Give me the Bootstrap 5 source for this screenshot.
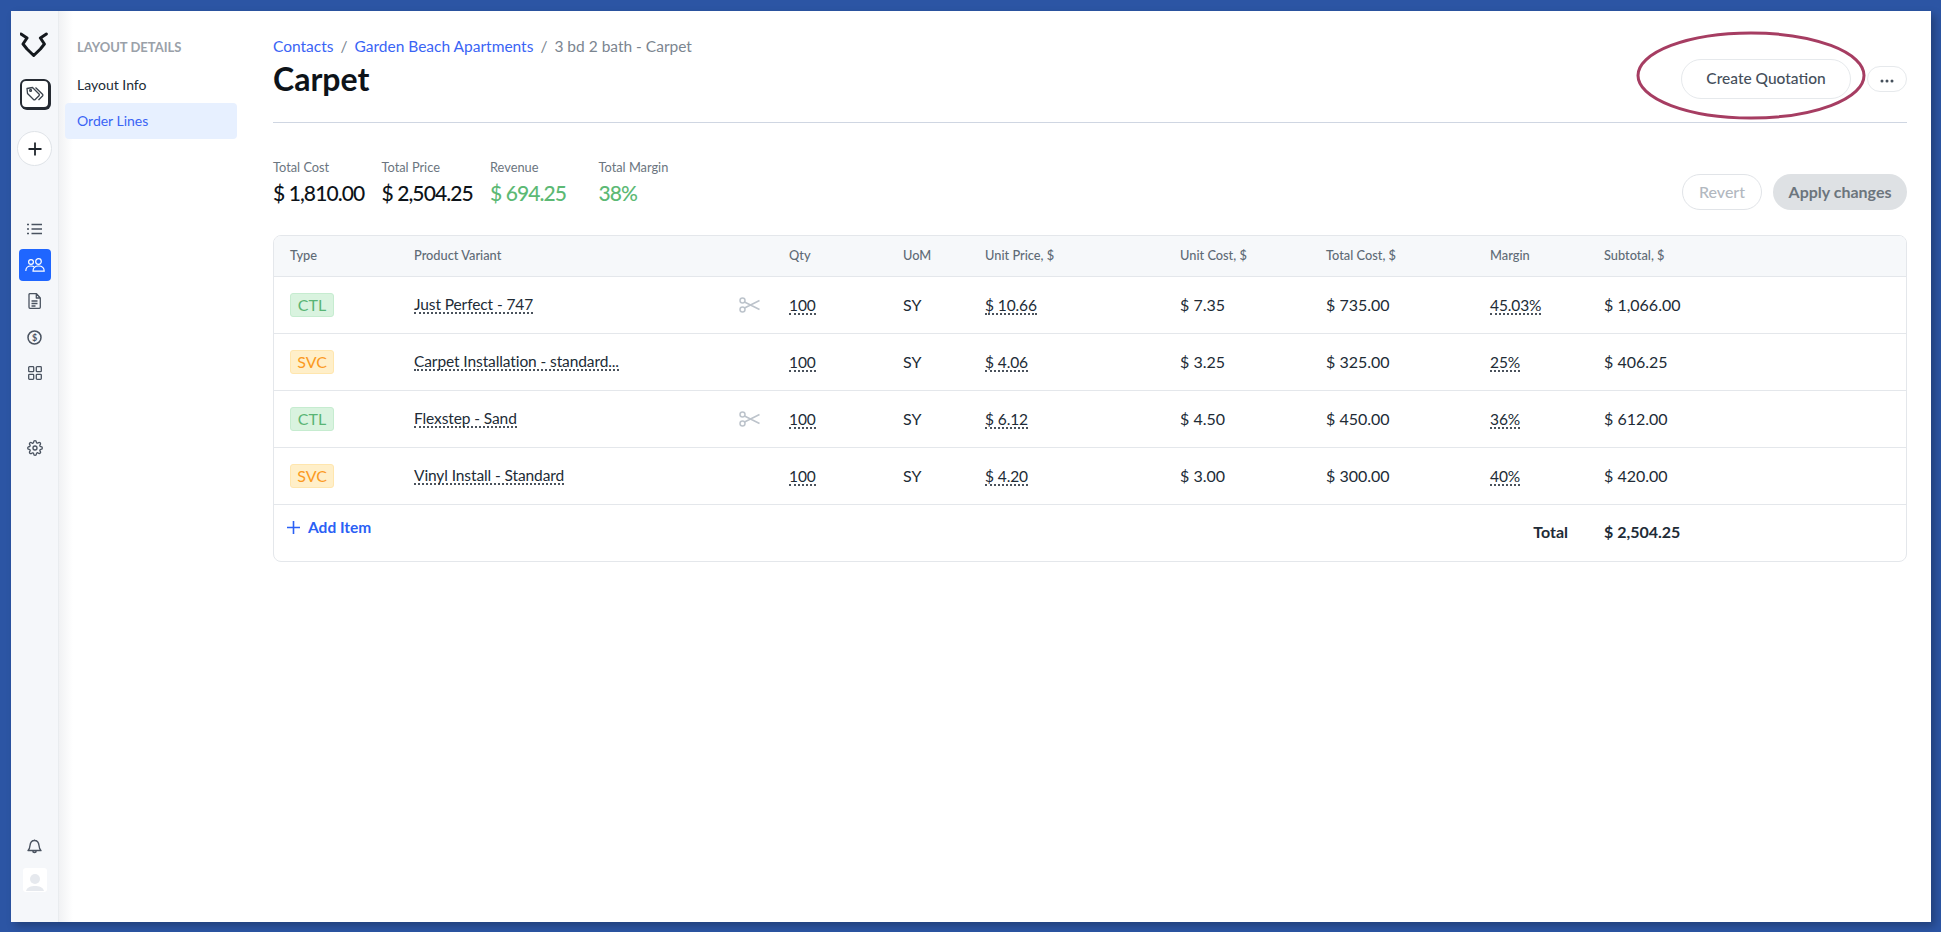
<!DOCTYPE html>
<html lang="en">
<head>
<meta charset="utf-8">
<title>Carpet</title>
<link href="https://cdn.jsdelivr.net/npm/bootstrap@5.3.0/dist/css/bootstrap.min.css" rel="stylesheet">
<style>
html,body{height:100%}
body{background:#2c55a4;font-family:"Lato","Liberation Sans",sans-serif;color:#212b36;padding:11px 10px 10px 11px;overflow:hidden}
.app-frame{height:911px;background:#fff;box-shadow:4px 4px 8px rgba(0,0,0,.25)}
.rail{width:48px;background:#f5f7fa;border-right:1px solid #e9ecef;flex:none;padding-top:21px}
.rail-logo{width:30px;height:26px}
.rail-tag{width:30px;height:30px;border:2px solid #262b33;border-radius:6px;background:#fff;margin-top:21px;box-shadow:1px 1px 0 #262b33}
.rail-plus{width:35px;height:35px;border:1px solid #dfe3e8;border-radius:50%;background:#fff;margin-top:22px}
.rail-item{width:32px;height:32px;border-radius:4px;color:#4a5360}
.rail-item.on{background:#1f66ff;color:#fff}
.rail-list{margin-top:47px}
.rail-next{margin-top:4px}
.rail-gear{margin-top:43px}
.rail-avatar{width:24px;height:24px;background:#fff;border-radius:3px;margin-top:6px;margin-bottom:30px}
.subnav{width:214px;flex:none;padding:27px 36px 0 6px;background:linear-gradient(90deg,#f1f2f4 0,#fff 14px)}
.subnav-title{font-size:13px;font-weight:700;color:#9aa1a9;padding-left:12px;line-height:18px;margin-bottom:11px}
.subnav-link{display:block;height:36px;line-height:36px;font-size:14px;padding-left:12px;border-radius:4px;color:#212b36;text-decoration:none}
.subnav-link.on{background:#e7f0ff;color:#3a64f5}
.main-area{min-width:0;padding:0 24px 0 0}
.head-row{height:112px;border-bottom:1px solid #cfd6e2;position:relative}
.crumbs{font-size:15.5px;line-height:20px;padding-top:25px;color:#7b8590;margin:0}
.crumbs a{color:#3a64f5;text-decoration:none}
.crumbs i{font-style:normal;padding:0 7px;color:#7b8590}
.page-title{font-size:32px;font-weight:700;line-height:40px;margin:3px 0 0;color:#0d1319}
.btn-quote{width:170px;height:40px;border:1px solid #e6e9ec;border-radius:20px;background:#fff;color:#454f5b;font-size:15.5px;font-weight:500;margin-top:48px;padding:0}
.btn-more{width:40px;height:26px;border:1px solid #e6e9ec;border-radius:13px;background:#fff;color:#454f5b;margin:55px 0 0 16px;padding:0;line-height:1}
.ring{position:absolute;right:41px;top:20px;width:230px;height:89px;pointer-events:none}
.stats-row{margin-top:36px;height:76px}
.stat-cell{width:108.5px}
.stat-label{font-size:12.8px;line-height:16px;color:#6b7580}
.stat-value{font-size:21px;letter-spacing:-.9px;font-weight:500;line-height:28px;margin-top:4px;color:#0d1319;white-space:nowrap}
.stat-value.up{color:#5cb974}
.stat-actions{margin-top:15px}
.btn-revert{width:80px;height:36px;border:1px solid #e1e4e8;border-radius:18px;background:#fff;color:#b2b8bf;font-size:16px;font-weight:500;padding:0}
.btn-apply{width:134px;height:36px;border:0;border-radius:18px;background:#dee1e4;color:#6c757d;font-size:16px;font-weight:700;padding:0;margin-left:11px}
.orders{border:1px solid #e4e7eb;border-radius:8px;overflow:hidden;margin-top:0}
.orders table{table-layout:fixed;width:100%;margin:0;--bs-table-border-color:#e4e7eb}
.orders th{height:40px;padding:0 0 0 16px;background:#f6f8fa;font-size:12.8px;font-weight:500;color:#5f6b76;vertical-align:middle}
.orders td{height:57px;padding:0 0 0 16px;font-size:16px;color:#212b36;vertical-align:middle;white-space:nowrap}
.orders tr:last-child td{border-bottom:0}
.orders td.add-cell{vertical-align:top;padding:11px 0 0 13px}
.kind{display:inline-block;width:44px;height:24px;line-height:22px;text-align:center;border-radius:3px;font-size:16px;border:1px solid}
.kind-ctl{background:#d9f3df;border-color:#c6ecd0;color:#59b575}
.kind-svc{background:#ffefc9;border-color:#ffe6ae;color:#fb9a1f}
.dots{border-bottom:2px dotted #4a525c;font-size:15.500px;letter-spacing:-.1px;line-height:16px;display:inline-block}
.product-cell{display:flex;align-items:center;justify-content:space-between;padding-right:13px;height:56px}
.add-link{color:#2a60f5;font-weight:700;font-size:15.500px;line-height:20px;text-decoration:none}
.orders td.total-cell{font-weight:700;padding-bottom:2px}
.orders td.total-label{text-align:right;padding:0 20px 2px 0;font-weight:700}
</style>
</head>
<body>
<div class="app-frame d-flex">
  <nav class="rail d-flex flex-column align-items-center">
    <svg class="rail-logo" viewBox="0 0 30 26" fill="none" stroke="#15191e" stroke-width="3" stroke-linejoin="round" stroke-linecap="round"><path d="M1 2 7 6 3 12 7 17 13.700 23.500 20.400 17 24.400 12 20.400 6 26.400 2"/></svg>
    <div class="rail-tag d-flex align-items-center justify-content-center">
      <svg width="20" height="20" viewBox="0 0 20 20" fill="none" stroke="#3a424c" stroke-width="1.300" stroke-linejoin="round"><path d="M2 4.500 7.500 3.500 14 10a1.200 1.200 0 0 1 0 1.700L10.200 15.500a1.200 1.200 0 0 1-1.700 0L2.500 9.500z"/><path d="M10.500 3.500 17.500 10.300a1.200 1.200 0 0 1 0 1.700l-4 4"/><circle cx="5.600" cy="6.400" r=".9"/></svg>
    </div>
    <div class="rail-plus d-flex align-items-center justify-content-center">
      <svg width="14" height="14" viewBox="0 0 14 14" stroke="#20262d" stroke-width="1.800"><path d="M7 .5v13M.5 7h13"/></svg>
    </div>
    <div class="rail-item rail-list d-flex align-items-center justify-content-center">
      <svg width="15" height="12" viewBox="0 0 15 12" fill="none" stroke="currentColor" stroke-width="1.500"><path d="M4.500 1.500H15M4.500 6H15M4.500 10.500H15M0 1.500h2M0 6h2M0 10.500h2"/></svg>
    </div>
    <div class="rail-item on rail-next d-flex align-items-center justify-content-center">
      <svg width="20" height="14" viewBox="0 0 20 14" fill="none" stroke="currentColor" stroke-width="1.200"><circle cx="6" cy="4" r="2.400"/><circle cx="13.500" cy="3.500" r="2.800"/><path d="M.8 13c0-3.500 2.200-5 5.200-5 1.200 0 2.200.2 3 .8M8 13.200c0-3.700 2.500-5.200 5.500-5.200s5.700 1.500 5.700 5.200z"/></svg>
    </div>
    <div class="rail-item rail-next d-flex align-items-center justify-content-center">
      <svg width="13" height="16" viewBox="0 0 13 16" fill="none" stroke="currentColor" stroke-width="1.300" stroke-linejoin="round"><path d="M1 1.500A1 1 0 0 1 2 .7h6.500L12.300 5v9.300a1 1 0 0 1-1 1H2a1 1 0 0 1-1-1zM8.300 1v4h4M3.500 8h6M3.500 10.500h6M3.500 13h4"/></svg>
    </div>
    <div class="rail-item rail-next d-flex align-items-center justify-content-center">
      <svg width="15" height="15" viewBox="0 0 15 15" fill="none"><circle cx="7.500" cy="7.500" r="6.500" stroke="currentColor" stroke-width="1.500"/><text x="7.500" y="10.700" text-anchor="middle" font-size="9" font-weight="700" fill="currentColor" font-family="Lato,sans-serif">$</text></svg>
    </div>
    <div class="rail-item rail-next d-flex align-items-center justify-content-center">
      <svg width="14" height="14" viewBox="0 0 14 14" fill="none" stroke="currentColor" stroke-width="1.300"><rect x=".7" y=".7" width="5" height="5" rx=".8"/><rect x="8.300" y=".7" width="5" height="5" rx=".8"/><rect x=".7" y="8.300" width="5" height="5" rx=".8"/><rect x="8.300" y="8.300" width="5" height="5" rx=".8"/></svg>
    </div>
    <div class="rail-item rail-gear d-flex align-items-center justify-content-center">
      <svg width="16" height="16" viewBox="0 0 24 24" fill="none" stroke="currentColor" stroke-width="2"><circle cx="12" cy="12" r="3"/><path d="M19.400 15a1.650 1.650 0 0 0 .33 1.820l.06.06a2 2 0 0 1 0 2.830 2 2 0 0 1-2.830 0l-.06-.06a1.650 1.650 0 0 0-1.820-.33 1.650 1.650 0 0 0-1 1.510V21a2 2 0 0 1-2 2 2 2 0 0 1-2-2v-.09A1.650 1.650 0 0 0 9 19.400a1.650 1.650 0 0 0-1.820.33l-.06.06a2 2 0 0 1-2.830 0 2 2 0 0 1 0-2.830l.06-.06a1.650 1.650 0 0 0 .33-1.820 1.650 1.650 0 0 0-1.510-1H3a2 2 0 0 1-2-2 2 2 0 0 1 2-2h.09A1.650 1.650 0 0 0 4.600 9a1.650 1.650 0 0 0-.33-1.820l-.06-.06a2 2 0 0 1 0-2.830 2 2 0 0 1 2.830 0l.06.06a1.650 1.650 0 0 0 1.820.33H9a1.650 1.650 0 0 0 1-1.510V3a2 2 0 0 1 2-2 2 2 0 0 1 2 2v.09a1.650 1.650 0 0 0 1 1.510 1.650 1.650 0 0 0 1.820-.33l.06-.06a2 2 0 0 1 2.830 0 2 2 0 0 1 0 2.830l-.06.06a1.650 1.650 0 0 0-.33 1.820V9a1.650 1.650 0 0 0 1.510 1H21a2 2 0 0 1 2 2 2 2 0 0 1-2 2h-.09a1.650 1.650 0 0 0-1.510 1z"/></svg>
    </div>
    <div class="rail-item mt-auto d-flex align-items-center justify-content-center">
      <svg width="15" height="15" viewBox="0 0 15 15" fill="none" stroke="currentColor" stroke-width="1.400" stroke-linejoin="round"><path d="M1 11.500c1.500-1 1.800-2.500 2-5C3.300 3.500 5 1.500 7.500 1.500s4.200 2 4.500 5c.2 2.500.5 4 2 5zM5.800 12c0 2 3.400 2 3.400 0M7.500 1.500V.5"/></svg>
    </div>
    <div class="rail-avatar d-flex align-items-end justify-content-center">
      <svg width="20" height="22" viewBox="0 0 20 22" fill="#e6e9ee"><circle cx="10" cy="9" r="5"/><path d="M1 21c1-4 5-5 9-5s8 1 9 5z"/></svg>
    </div>
  </nav>
  <aside class="subnav">
    <div class="subnav-title">LAYOUT DETAILS</div>
    <a class="subnav-link" href="#">Layout Info</a>
    <a class="subnav-link on" href="#">Order Lines</a>
  </aside>
  <main class="main-area flex-grow-1">
    <div class="head-row d-flex justify-content-between">
      <div>
        <p class="crumbs"><a href="#">Contacts</a><i>/</i><a href="#">Garden Beach Apartments</a><i>/</i>3 bd 2 bath - Carpet</p>
        <h1 class="page-title">Carpet</h1>
      </div>
      <div class="d-flex align-items-start">
        <button class="btn-quote" type="button">Create Quotation</button>
        <button class="btn-more" type="button"><svg width="14" height="4" viewBox="0 0 14 4" fill="#454f5b"><circle cx="2" cy="2" r="1.500"/><circle cx="7" cy="2" r="1.500"/><circle cx="12" cy="2" r="1.500"/></svg></button>
      </div>
      <svg class="ring" viewBox="0 0 230 89" fill="none"><ellipse cx="115" cy="44.500" rx="113" ry="42.500" stroke="#a63d62" stroke-width="3"/></svg>
    </div>
    <div class="stats-row d-flex justify-content-between align-items-start">
      <div class="d-flex">
        <div class="stat-cell"><div class="stat-label">Total Cost</div><div class="stat-value">$ 1,810.00</div></div>
        <div class="stat-cell"><div class="stat-label">Total Price</div><div class="stat-value">$ 2,504.25</div></div>
        <div class="stat-cell"><div class="stat-label">Revenue</div><div class="stat-value up">$ 694.25</div></div>
        <div class="stat-cell"><div class="stat-label">Total Margin</div><div class="stat-value up">38%</div></div>
      </div>
      <div class="d-flex stat-actions">
        <button class="btn-revert" type="button">Revert</button>
        <button class="btn-apply" type="button">Apply changes</button>
      </div>
    </div>
    <div class="orders">
      <table class="table">
        <colgroup><col style="width:124px"><col style="width:375px"><col style="width:114px"><col style="width:82px"><col style="width:195px"><col style="width:146px"><col style="width:164px"><col style="width:114px"><col></colgroup>
        <thead><tr><th>Type</th><th>Product Variant</th><th>Qty</th><th>UoM</th><th>Unit Price, $</th><th>Unit Cost, $</th><th>Total Cost, $</th><th>Margin</th><th>Subtotal, $</th></tr></thead>
        <tbody>
          <tr><td><span class="kind kind-ctl">CTL</span></td><td><div class="product-cell"><span class="dots">Just Perfect - 747</span><svg width="21" height="16" viewBox="0 0 21 16" fill="none" stroke="#bcc3cb" stroke-width="1.500"><circle cx="3.500" cy="3.500" r="2.500"/><circle cx="3.500" cy="12.500" r="2.500"/><path d="M5.500 5 20.500 12.500M5.500 11 20.500 3.500"/></svg></div></td><td><span class="dots">100</span></td><td>SY</td><td><span class="dots">$ 10.66</span></td><td>$ 7.35</td><td>$ 735.00</td><td><span class="dots">45.03%</span></td><td>$ 1,066.00</td></tr>
          <tr><td><span class="kind kind-svc">SVC</span></td><td><div class="product-cell"><span class="dots">Carpet Installation - standard...</span></div></td><td><span class="dots">100</span></td><td>SY</td><td><span class="dots">$ 4.06</span></td><td>$ 3.25</td><td>$ 325.00</td><td><span class="dots">25%</span></td><td>$ 406.25</td></tr>
          <tr><td><span class="kind kind-ctl">CTL</span></td><td><div class="product-cell"><span class="dots">Flexstep - Sand</span><svg width="21" height="16" viewBox="0 0 21 16" fill="none" stroke="#bcc3cb" stroke-width="1.500"><circle cx="3.500" cy="3.500" r="2.500"/><circle cx="3.500" cy="12.500" r="2.500"/><path d="M5.500 5 20.500 12.500M5.500 11 20.500 3.500"/></svg></div></td><td><span class="dots">100</span></td><td>SY</td><td><span class="dots">$ 6.12</span></td><td>$ 4.50</td><td>$ 450.00</td><td><span class="dots">36%</span></td><td>$ 612.00</td></tr>
          <tr><td><span class="kind kind-svc">SVC</span></td><td><div class="product-cell"><span class="dots">Vinyl Install - Standard</span></div></td><td><span class="dots">100</span></td><td>SY</td><td><span class="dots">$ 4.20</span></td><td>$ 3.00</td><td>$ 300.00</td><td><span class="dots">40%</span></td><td>$ 420.00</td></tr>
          <tr><td colspan="2" class="add-cell"><a class="add-link d-inline-flex align-items-center gap-2" href="#"><svg width="13" height="13" viewBox="0 0 13 13" stroke="#2a60f5" stroke-width="1.600"><path d="M6.500 0v13M0 6.500h13"/></svg>Add Item</a></td><td colspan="5"></td><td class="total-label">Total</td><td class="total-cell">$ 2,504.25</td></tr>
        </tbody>
      </table>
    </div>
  </main>
</div>
<script src="https://cdn.jsdelivr.net/npm/bootstrap@5.3.0/dist/js/bootstrap.bundle.min.js"></script>
</body>
</html>
